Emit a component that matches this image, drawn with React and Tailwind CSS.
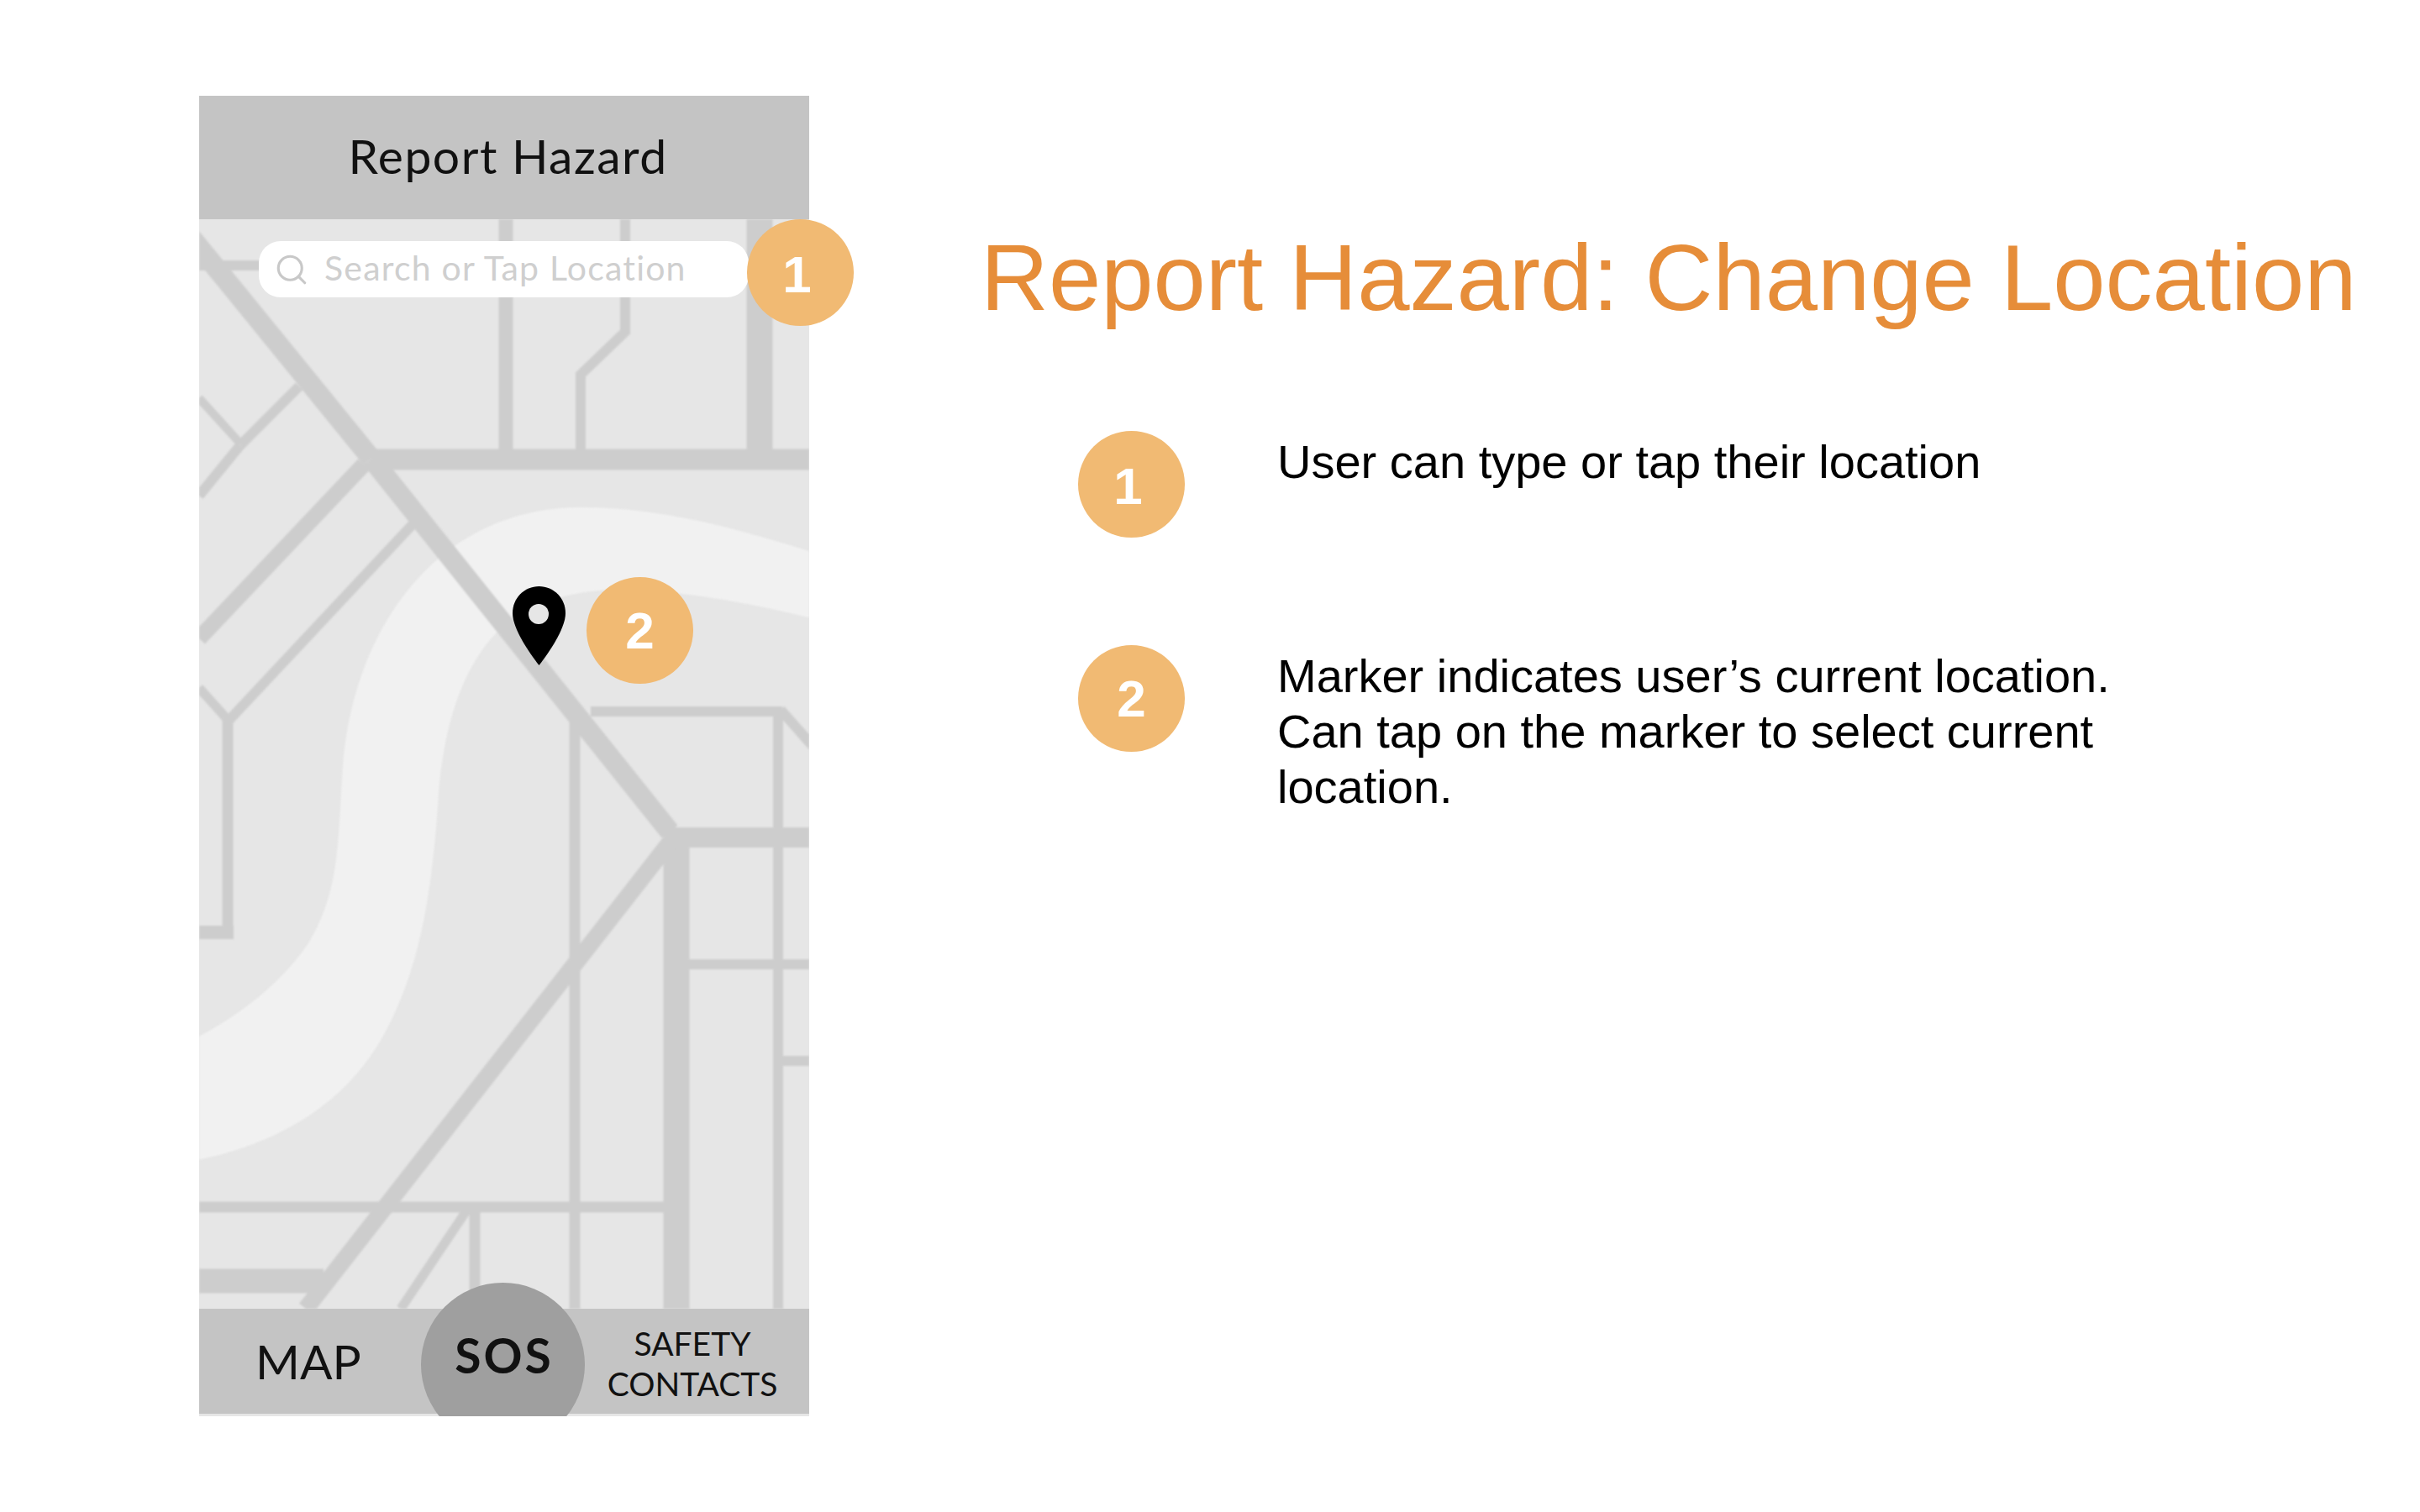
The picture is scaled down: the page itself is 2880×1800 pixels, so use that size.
import React from 'react';
import { Search } from 'lucide-react';

const arial = "font-['Liberation_Sans',Arial,sans-serif]";
const phoneFont = "font-['Lato','Noto_Sans',sans-serif]";

// [x1, y1, x2, y2, width], in page pixels (the svg viewBox starts at the map's corner)
const roads = [
  [210, 261, 442, 546, 24],
  [442, 546, 797, 990, 24],
  [442, 547, 963, 547, 25],
  [602, 261, 602, 547, 17],
  [904, 261, 904, 547, 31],
  [237, 316, 310, 316, 12],
  [237, 474, 286, 528, 10],
  [356, 460, 286, 530, 12],
  [286, 530, 237, 590, 12],
  [433, 553, 237, 760, 19],
  [495, 620, 272, 858, 12],
  [237, 819, 272, 858, 11],
  [271, 856, 271, 1116, 13],
  [237, 1110, 278, 1110, 16],
  [703, 847, 931, 847, 12],
  [929, 845, 968, 889, 12],
  [684, 850, 684, 1558, 13],
  [926, 847, 926, 1558, 12],
  [797, 997, 963, 997, 24],
  [805, 985, 805, 1558, 31],
  [817, 1148, 963, 1148, 12],
  [931, 1263, 963, 1263, 12],
  [797, 1003, 364, 1558, 20],
  [237, 1437, 791, 1437, 13],
  [237, 1525, 385, 1525, 29],
  [558, 1437, 477, 1558, 11],
  [565, 1437, 565, 1558, 13],
];

const Badge = ({ children, className = '', digitClass = '' }) => (
  <div className={`flex h-[127px] w-[127px] shrink-0 items-center justify-center rounded-full bg-[#F1BA73] text-[62px] font-bold leading-none text-white ${arial} ${className}`}>
    <span className={digitClass}>{children}</span>
  </div>
);

const MapBackground = () => (
  <svg viewBox="237 261 726 1297" className="block h-full w-full blur-[1px]" fill="none">
    <path
      d="M975 660C880 630 790 604 690 604C620 604 560 630 516 670C450 730 415 820 408 912C402 1000 405 1060 367 1123C335 1170 285 1210 225 1240L225 1383C320 1365 420 1320 470 1205C505 1130 515 1040 521 960C525 880 545 800 591 753C630 715 690 700 749 702C830 705 900 720 975 738Z"
      fill="#F1F1F1"
    />
    <path d="M744 261V395L691 446V547" stroke="#CDCDCD" strokeWidth="12" />
    {roads.map(([x1, y1, x2, y2, w], i) => (
      <line key={i} x1={x1} y1={y1} x2={x2} y2={y2} stroke="#CDCDCD" strokeWidth={w} />
    ))}
  </svg>
);

const Phone = () => (
  <div className={`relative flex h-[1572px] w-[726px] shrink-0 flex-col ${phoneFont}`}>
    <div className="flex h-[147px] shrink-0 items-center justify-center bg-[#C4C4C4] pb-[3px] pl-[9px] text-[57px] tracking-[1.5px] text-[#111]">
      Report Hazard
    </div>
    <div className="relative min-h-0 flex-1 overflow-hidden bg-[#E6E6E6]">
      <MapBackground />
      <div className="absolute left-[71px] top-[26px] flex h-[67px] w-[583px] items-center rounded-[26px] bg-white pb-[4px] pl-[18px] text-[41px] tracking-[1.2px] text-[#CFCFCF]">
        <Search size={42} strokeWidth={1.8} className="mr-[18px] mt-[4px] text-[#C8C8C8]" />
        Search or Tap Location
      </div>
    </div>
    <div className="flex h-[125px] shrink-0 items-center bg-[#C4C4C4] text-[#111]">
      <span className="ml-[67px] w-[198px] text-[57px] leading-none">MAP</span>
      <div className="absolute bottom-0 left-[264px] h-[159px] w-[195px] overflow-hidden">
        <div className="flex h-[195px] w-[195px] justify-center rounded-full bg-[#9F9F9F] pl-[3px] pt-[58px] text-[57px] font-bold leading-none tracking-[3px]">
          SOS
        </div>
      </div>
      <span className="ml-[188px] mt-[5px] w-[268px] text-center text-[39px] leading-[48px]">
        SAFETY
        <br />
        CONTACTS
      </span>
    </div>
    <div className="h-[3px] shrink-0 bg-[#E6E6E6]" />

    <Badge className="absolute left-[652px] top-[147px]" digitClass="-ml-[8px] mt-[4px]">1</Badge>
    <svg viewBox="0 0 63 94" className="absolute left-[373px] top-[584px] h-[94px] w-[63px]">
      <path d="M31.5 0C49 0 63 14 63 32C63 50 44 78 31.5 94C19 78 0 50 0 32C0 14 14 0 31.5 0Z" fill="#000" />
      <circle cx="31" cy="33" r="12" fill="#E6E6E6" />
    </svg>
    <Badge className="absolute left-[461px] top-[573px]">2</Badge>
  </div>
);

export default function App() {
  return (
    <div className="flex h-[1800px] w-[2880px] bg-white pl-[237px] pt-[114px]">
      <Phone />
      <div className={`ml-[204px] pt-[161px] ${arial}`}>
        <h1 className="whitespace-nowrap text-[112px] font-normal leading-[112px] text-[#E68D39]">
          Report Hazard: Change Location
        </h1>
        <div className="ml-[116px] mt-[126px] flex h-[255px] gap-[110px]">
          <Badge digitClass="-ml-[8px] mt-[5px]">1</Badge>
          <p className="mt-[4px] text-[56px] leading-[66px] text-black">User can type or tap their location</p>
        </div>
        <div className="ml-[116px] flex gap-[110px]">
          <Badge>2</Badge>
          <p className="mt-[4px] w-[1020px] text-[56px] leading-[66px] text-black">
            Marker indicates user’s current location.
            <br />
            Can tap on the marker to select current
            <br />
            location.
          </p>
        </div>
      </div>
    </div>
  );
}
